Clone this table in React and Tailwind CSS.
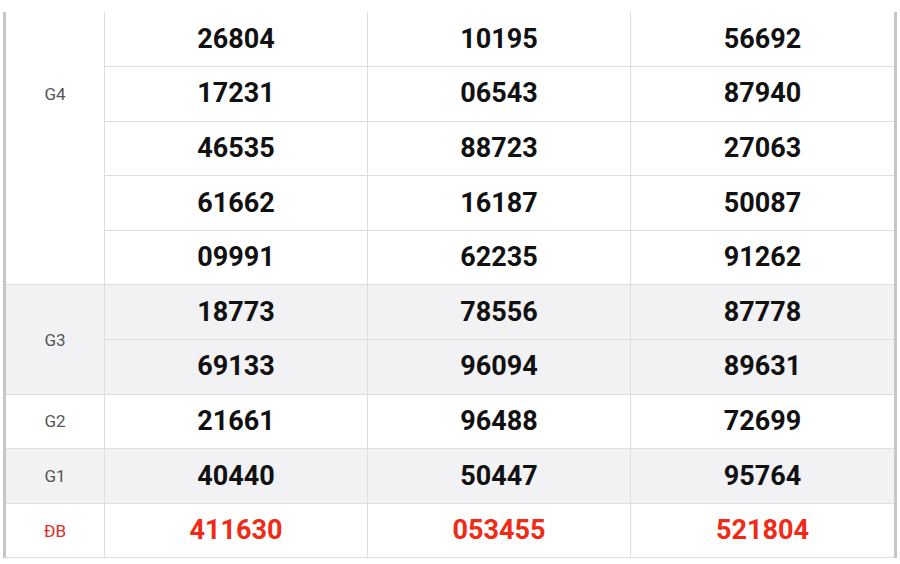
// App.jsx

const groups = [
    {
        label: "G4",
        top: true,
        rows: [
            ["26804", "10195", "56692"],
            ["17231", "06543", "87940"],
            ["46535", "88723", "27063"],
            ["61662", "16187", "50087"],
            ["09991", "62235", "91262"],
        ],
    },
    {
        label: "G3",
        shaded: true,
        rows: [
            ["18773", "78556", "87778"],
            ["69133", "96094", "89631"],
        ],
    },
    { label: "G2", rows: [["21661", "96488", "72699"]] },
    { label: "G1", shaded: true, rows: [["40440", "50447", "95764"]] },
    { label: "ĐB", special: true, rows: [["411630", "053455", "521804"]] },
];

const App = () => {
    return (
        <div className="w-[900px] h-[564px] bg-white pt-[12px] pl-[3px] overflow-hidden font-['Roboto',sans-serif]">
            <table className="w-[894px] table-fixed border-collapse border-l-[3px] border-r-[3px] border-l-[#c6c6c8] border-r-[#c6c6c8]">
                <colgroup>
                    <col className="w-[100px]" />
                    <col className="w-[263px]" />
                    <col className="w-[263px]" />
                    <col />
                </colgroup>
                <tbody>
                    {groups.map((g) =>
                        g.rows.map((row, i) => (
                            <tr
                                key={g.label + i}
                                className={`h-[54.6px] ${g.shaded ? "bg-[#f2f2f4]" : "bg-white"}`}
                            >
                                {i === 0 && (
                                    <td
                                        rowSpan={g.rows.length}
                                        className={`text-center text-[17px] leading-[22px] border-r border-b border-[#dedee2] ${g.top ? "align-top pt-[71px]" : "align-middle"} ${g.special ? "text-[#e0291d]" : "text-[#555555]"}`}
                                    >
                                        {g.label}
                                    </td>
                                )}
                                {row.map((n, j) => (
                                    <td
                                        key={j}
                                        className={`text-center align-middle text-[27px] font-bold leading-none border-b border-[#dedee2] ${j < 2 ? "border-r" : ""} ${g.special ? "text-[#f02a16]" : "text-[#111111]"}`}
                                    >
                                        {n}
                                    </td>
                                ))}
                            </tr>
                        ))
                    )}
                </tbody>
            </table>
        </div>
    );
};

export default App;
